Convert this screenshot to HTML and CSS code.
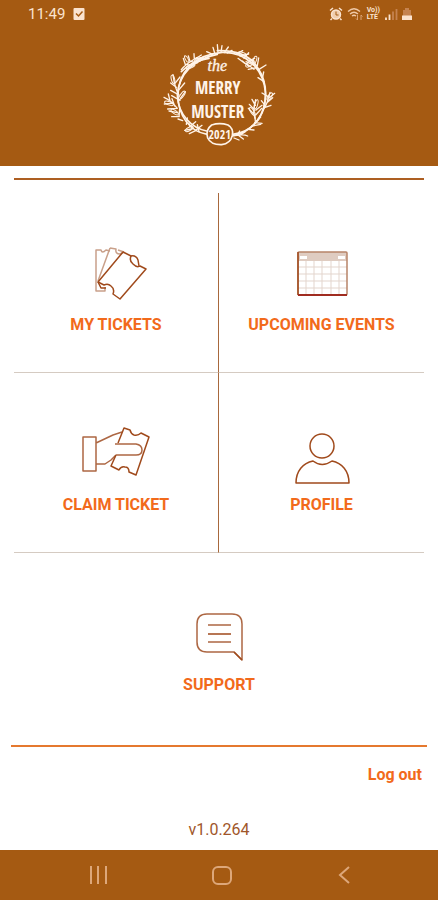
FILE: index.html
```html
<!DOCTYPE html>
<html lang="en">
<head>
<meta charset="UTF-8">
<meta name="viewport" content="width=device-width, initial-scale=1.0">
<title>The Merry Muster</title>
<link rel="stylesheet" href="styles.css">
</head>
<body>

<header class="header">
    <div class="status-bar">
        <span class="clock">11:49</span>
        <svg class="task-icon" viewBox="0 0 12 14" width="12" height="14">
            <rect x="0.5" y="1" width="11" height="12" rx="1" fill="#fbe3cf"/>
            <path d="M3 6.500l2.500 2.500L9.500 4.500" fill="none" stroke="#a55a12" stroke-width="1.500"/>
        </svg>
        <div class="status-icons">
            <svg viewBox="0 0 14 14" width="14" height="14">
                <circle cx="7" cy="7.500" r="4.500" fill="#f0cdae" stroke="#fbe3cf" stroke-width="1.500"/>
                <path d="M1 3.500l3-2.500M13 3.500l-3-2.500M3 11.500l-1.500 1.500M11 11.500l1.500 1.500" stroke="#fbe3cf" stroke-width="1.500"/>
                <path d="M7 4.500v3.500h2.500" fill="none" stroke="#a55a12"/>
            </svg>
            <svg viewBox="0 0 16 14" width="16" height="14">
                <path d="M1 4.500q6-5.500 12 0M3 7q4-3.500 8 0M5 9q2-1.500 4 0" fill="none" stroke="#efc9a8" stroke-width="1.300"/>
                <path d="M10.500 8v5M9 11.500l1.500 1.500M14 13V8M15.500 9.500L14 8" fill="none" stroke="#d9a377"/>
            </svg>
            <span class="volte">Vo))<br>LTE</span>
            <svg viewBox="0 0 14 14" width="14" height="14">
                <path d="M2 13v-2.500M5.500 13V7.500" stroke="#fbe3cf" stroke-width="1.800"/>
                <path d="M9 13V4.500M12.500 13V2" stroke="#c58350" stroke-width="1.800"/>
            </svg>
            <svg viewBox="0 0 10 14" width="10" height="14">
                <path d="M1 3h2V1h4v2h2v10H1z" fill="#c58350"/>
                <path d="M0 8.500h10v4.500H0z" fill="#fbe3cf"/>
            </svg>
        </div>
    </div>

    <svg class="logo" viewBox="0 0 390 360" role="img" aria-label="The Merry Muster 2021">
        <!-- wreath rings -->
        <g class="vine">
            <path d="M160 298C105 290 74 240 72 185C70 110 125 58 205 52C280 50 328 105 334 170C338 235 300 290 235 303"/>
            <path d="M158 288C115 280 72 240 70 180C75 115 120 72 190 58"/>
            <path d="M190 47C245 45 290 62 312 100C346 150 342 230 300 268C285 284 260 295 236 298"/>
            <path d="M82 110C100 92 120 78 165 70"/>
        </g>
        <!-- twigs -->
        <g class="twig">
            <path d="M182 54l-5-17M192 52l-2-23M201 52l3-20M211 53l12-17M220 54l14-8M176 58l-18-8"/>
            <path d="M82 104C95 85 118 75 142 60M94 89l-6-19M108 79l-5-16M121 72l-1-16M96 88l20 3M110 79l19 5M124 70l22 1"/>
            <path d="M246 57l20-10M258 63l26-6M270 70l14-17M282 78l20-8M252 70l20 15M265 78l21 17M278 86l22 17"/>
            <path d="M304 93l-28-13M308 98l-25 5M310 92l4-23M314 104l22-14M326 126l3-15M330 140l-18-12"/>
            <path d="M75 180C62 160 60 140 57 119M67 157l-17-13M70 170l22-26M63 145l15-19M72 178l-22-12M78 196l-25-14M79 190l15-20"/>
            <path d="M70 220C58 205 45 193 30 187M55 205l-24 2M48 197l-5-20M62 213l-8-22M70 220l-29 2M70 233l-25-5M76 244l-23 1M75 245l2-25"/>
            <path d="M86 257l-14-5M97 268l3-19M107 275l18-15M115 281l-11-17M125 286l19-15M135 290l-5-21M112 282l-20 4M125 287l-19 9"/>
            <path d="M303 250C296 230 300 211 305 194M301 239l-18-19M302 225l-16-17M304 211l-10-18M305 240l18-20M306 225l18-14"/>
            <path d="M327 226C338 211 344 190 348 172M337 205l19-17M341 192l21-17M334 212l-12-15M331 218l20-7M341 184l-17-10"/>
            <path d="M294 273l26-5M302 263l22 2M304 260l-1-16M306 260l14-14M281 283l19 2"/>
            <path d="M239 302C253 301 268 296 281 303M250 300l7-12M260 299l13-8M255 302l13 10M240 309l15 6"/>
        </g>
        <!-- leaves -->
        <g class="leaf">
            <ellipse cx="98" cy="72" rx="11" ry="4" transform="rotate(62 98 72)"/>
            <ellipse cx="133" cy="75" rx="13" ry="5" transform="rotate(-25 133 75)"/>
            <ellipse cx="110" cy="94" rx="14" ry="5" transform="rotate(-25 110 94)"/>
            <ellipse cx="265" cy="57" rx="13" ry="5" transform="rotate(18 265 57)"/>
            <ellipse cx="288" cy="86" rx="15" ry="6" transform="rotate(-35 288 86)"/>
            <ellipse cx="302" cy="76" rx="13" ry="5" transform="rotate(-70 302 76)"/>
            <ellipse cx="57" cy="133" rx="13" ry="5" transform="rotate(76 57 133)"/>
            <ellipse cx="84" cy="181" rx="15" ry="5" transform="rotate(-54 84 181)"/>
            <ellipse cx="45" cy="205" rx="14" ry="5" transform="rotate(20 45 205)"/>
            <ellipse cx="62" cy="231" rx="13" ry="5" transform="rotate(35 62 231)"/>
            <ellipse cx="106" cy="282" rx="13" ry="5" transform="rotate(-28 106 282)"/>
            <ellipse cx="295" cy="230" rx="14" ry="5" transform="rotate(57 295 230)"/>
            <ellipse cx="307" cy="208" rx="14" ry="4" transform="rotate(-75 307 208)"/>
            <ellipse cx="347" cy="185" rx="13" ry="5" transform="rotate(-58 347 185)"/>
        </g>
        <path class="badge" d="M173 270Q197 262 222 270Q240 281 235 302Q229 326 203 329Q171 330 161 309Q153 285 173 270z"/>
        <text class="logo-the" x="190" y="109">the</text>
        <text class="logo-name" x="191" y="176">MERRY</text>
        <text class="logo-name" x="191" y="248">MUSTER</text>
        <text class="logo-year" x="197" y="313">2021</text>
    </svg>
</header>

<main class="content">
    <nav class="menu">
        <a class="tile" href="#tickets">
            <svg class="icon" viewBox="0 0 80 64">
                <g class="light">
                    <path d="M20 43V7h5q1 4 5 0l4 1M20 43v5h9v-4"/>
                    <path d="M34 5L22 38M34 5l6 1q-1 5 4 5l4-2"/>
                    <path d="M42 7l6 2"/>
                </g>
                <path d="M47 9l8 4q-2 5 2 8q4 4 7 2l6 3L44 56l-7-5q2-5-2-8q-3-3-7-1l-6-3z"/>
                <path d="M55 13q5-1 7 4l1 6M22 39l3 6h5"/>
            </svg>
            MY TICKETS
        </a>
        <a class="tile" href="#events">
            <svg class="icon" viewBox="0 0 80 64">
                <path class="grid-line" d="M24 18v34M32 18v34M40 18v34M49 18v34M57 18v34M16 24h49M16 31h49M16 38h49M16 45h49"/>
                <path d="M16 9h49v9H16z" fill="#dfccc1" stroke="none"/>
                <path d="M18 13h7v3h-7zM56 13h7v3h-7z" fill="#fff" stroke="none"/>
                <rect x="16" y="9" width="49" height="43" rx="1" stroke="#b88468"/>
                <path d="M16 9v43" />
                <path d="M16 52h49" stroke="#a02c20" stroke-width="2"/>
            </svg>
            UPCOMING EVENTS
        </a>
        <a class="tile" href="#claim">
            <svg class="icon" viewBox="0 0 80 64">
                <path d="M7 14h13v34H7zM20 20l17-8 9-3M20 41h9l6-4 5-5" stroke="#ad6743"/>
                <path d="M42 20l6-15 6 2q1 4 4 5q4 1 7-2l8 4-13 38-7-3q0-5-4-5q-4-1-6 3l-8-4 5-11"/>
                <path d="M39 21h21q6 1 6 6t-6 5H40" stroke="#ad6743"/>
            </svg>
            CLAIM TICKET
        </a>
        <a class="tile" href="#profile">
            <svg class="icon" viewBox="0 0 80 64">
                <circle cx="40" cy="23" r="12"/>
                <path d="M14 60C14 48 21 40 31 38Q40 45 50 38C60 40 67 48 67 60z"/>
            </svg>
            PROFILE
        </a>
        <a class="tile wide" href="#support">
            <svg class="icon" viewBox="0 0 80 64">
                <path d="M63 57V21q0-10-10-10H28q-10 0-10 10v18q0 10 10 10h27z" stroke="#ad6743"/>
                <path d="M29 22h23M29 39h23" stroke="#ad6743"/>
                <path d="M29 31h23M55 49l8 8"/>
            </svg>
            SUPPORT
        </a>
    </nav>

    <div class="footer">
        <a class="logout" href="#logout">Log out</a>
        <p class="version">v1.0.264</p>
    </div>
</main>

<div class="nav-bar">
    <button class="nav-button" aria-label="Recent apps">
        <svg viewBox="0 0 20 20" width="20" height="20"><path d="M2 1v18M9 1v18M17 1v18"/></svg>
    </button>
    <button class="nav-button" aria-label="Home">
        <svg viewBox="0 0 20 20" width="20" height="20"><rect x="1" y="2" width="18" height="17" rx="5"/></svg>
    </button>
    <button class="nav-button" aria-label="Back">
        <svg viewBox="0 0 20 20" width="20" height="20"><path d="M15 2L6 10l9 8"/></svg>
    </button>
</div>

</body>
</html>
```
FILE: styles.css
```css
* {
    box-sizing: border-box;
}

body {
    font-family: Roboto, Arial, sans-serif;
    margin: 0;
    min-height: 100vh;
    display: flex;
    flex-direction: column;
    background-color: #fff;
}

a {
    text-decoration: none;
}

.header {
    background-color: #a55a12;
    padding-bottom: 11px;
}

.status-bar {
    display: flex;
    align-items: center;
    height: 28px;
    padding: 0 26px 0 28px;
    color: #fbe3cf;
}

.clock {
    font-size: 15px;
    line-height: 28px;
    margin-right: 8px;
}

.status-icons {
    display: flex;
    align-items: center;
    gap: 4px;
    margin-left: auto;
}

.volte {
    font-size: 7px;
    line-height: 7px;
    font-weight: bold;
}

.logo {
    display: block;
    width: 130px;
    height: 120px;
    margin: 7px auto 0;
    fill: none;
    stroke: #fff3e8;
    stroke-linecap: round;
}

.vine {
    stroke-width: 5px;
}

.twig {
    stroke-width: 4px;
}

.leaf {
    stroke-width: 3px;
}

.badge {
    fill: #a55a12;
    stroke-width: 5px;
}

.logo text {
    fill: #fff3e8;
    stroke: none;
    text-anchor: middle;
}

.logo .logo-the {
    font-family: "Liberation Serif", serif;
    font-style: italic;
    font-size: 48px;
    stroke: #fff3e8;
    stroke-width: 1px;
}

.logo-name {
    font-family: "Open Sans Condensed", "Liberation Sans Narrow", "Liberation Sans", sans-serif;
    font-size: 51px;
}

.logo-year {
    font-family: "Open Sans Condensed", "Liberation Sans Narrow", sans-serif;
    font-weight: bold;
    font-size: 36px;
}

.content {
    flex: 1;
    display: flex;
    flex-direction: column;
    padding: 12px 11px 0;
}

.menu {
    display: grid;
    grid-template-columns: 1fr 1fr;
    margin: 0 3px;
    padding-top: 13px;
    border-top: 2px solid #ad5f22;
}

.tile {
    display: flex;
    flex-direction: column;
    align-items: center;
    gap: 8px;
    height: 180px;
    padding-top: 50px;
    border-bottom: 1px solid #d5cbc2;
    color: #f26a1b;
    font-size: 16px;
    line-height: 20px;
    font-weight: 700;
}

.tile:nth-child(odd) {
    border-right: 1px solid #a8683c;
}

.tile.wide {
    grid-column: 1 / 3;
    border: none;
}

.icon {
    width: 80px;
    height: 64px;
    fill: none;
    stroke: #a04a1c;
    stroke-width: 1.5px;
    stroke-linejoin: round;
}

.icon .light {
    stroke: #c9a08a;
}

.icon .grid-line {
    stroke: #e3d5cd;
    stroke-width: 1px;
}

.footer {
    margin-top: 12px;
    padding: 18px 5px 10px;
    border-top: 2px solid #e5792f;
    display: flex;
    flex-direction: column;
}

.logout {
    align-self: flex-end;
    color: #f26a1b;
    font-size: 16px;
    line-height: 20px;
    font-weight: 700;
}

.version {
    margin: 35px 0 0;
    color: #a0562a;
    font-size: 16px;
    line-height: 20px;
    text-align: center;
}

.nav-bar {
    display: flex;
    justify-content: space-between;
    align-items: center;
    height: 50px;
    padding: 0 79px 0 84px;
    background-color: #a55a12;
}

.nav-button {
    display: flex;
    padding: 5px;
    border: none;
    background: none;
    cursor: pointer;
}

.nav-button svg {
    fill: none;
    stroke: #dda77a;
    stroke-width: 2px;
}
```
